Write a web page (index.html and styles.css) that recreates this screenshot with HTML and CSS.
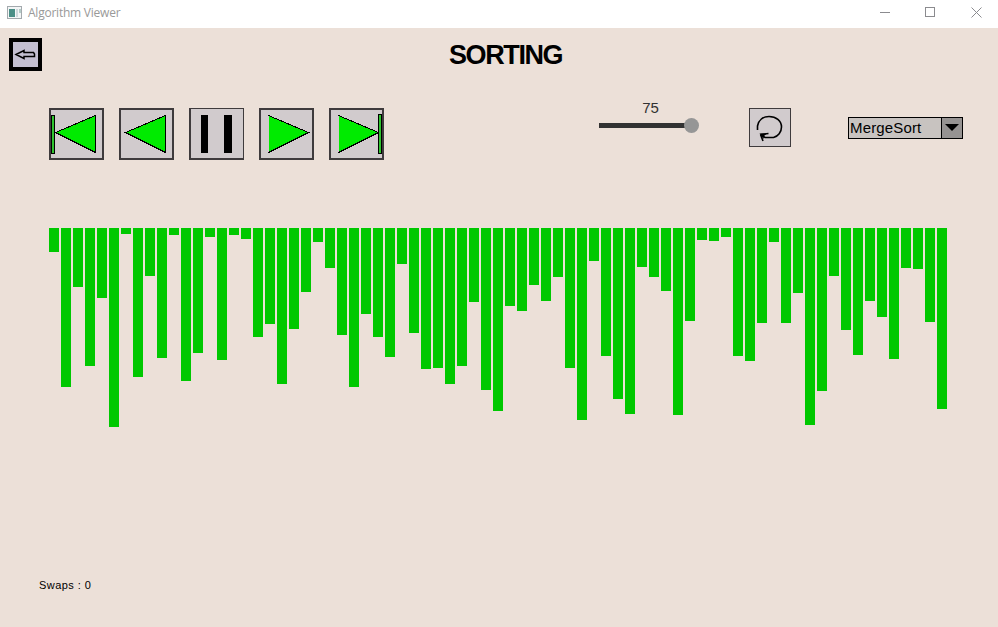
FILE: index.html
```html
<!DOCTYPE html>
<html lang="en">
<head>
<meta charset="utf-8">
<title>Algorithm Viewer</title>
<link rel="stylesheet" href="styles.css">
</head>
<body>
<header class="titlebar">
  <svg class="app-icon" width="16" height="14" viewBox="0 0 16 14">
    <rect x=".5" y=".5" width="14" height="12" fill="#f4f6f7" stroke="#a3a9ad"/>
    <rect x="2" y="3" width="6" height="8" fill="#4b8f87"/>
    <rect x="9" y="3" width="2" height="8" fill="#cfd8dc"/>
    <rect x="12" y="3" width="2" height="4" fill="#b4ccc8"/>
  </svg>
  <span class="app-name">Algorithm Viewer</span>
  <div class="window-buttons">
    <svg width="11" height="11"><path d="M0 5.500H10" stroke="#8b8b8f"/></svg>
    <svg width="11" height="11"><rect x=".5" y=".5" width="9" height="9" fill="none" stroke="#8b8b8f"/></svg>
    <svg width="11" height="11"><path d="M.5 .5L10.500 10.500M10.500 .5L.5 10.500" stroke="#8b8b8f"/></svg>
  </div>
</header>
<main>
  <div class="heading">
    <button class="back" aria-label="Back">
      <svg width="25" height="25" viewBox="0 0 25 25"><path d="M3 12.500L11 8.500V10.500H20.500L21.500 12V14.500H11V16.500Z" fill="none" stroke="#000" stroke-width="1.500"/></svg>
    </button>
    <h1>SORTING</h1>
  </div>
  <div class="toolbar">
    <div class="playback">
      <button class="step" aria-label="First"><svg width="51" height="48" shape-rendering="crispEdges"><rect x=".5" y="5.500" width="3" height="38" fill="#2fc42f" stroke="#000"/><path d="M4.500 22.500L44.500 5.500V42.500Z" fill="#00eb00" stroke="#000"/></svg></button>
      <button class="step" aria-label="Previous"><svg width="51" height="48" shape-rendering="crispEdges"><path d="M4.500 22.500L44.500 5.500V42.500Z" fill="#00eb00" stroke="#000"/></svg></button>
      <button class="step pause" aria-label="Pause"><svg width="51" height="48" shape-rendering="crispEdges"><path d="M10 5H17V43H10ZM33 5H41V43H33Z"/></svg></button>
      <button class="step" aria-label="Next"><svg width="51" height="48" shape-rendering="crispEdges"><path d="M47.500 22.500L7.500 5.500V42.500Z" fill="#00eb00"/><path d="M7.500 5.500L47.500 22.500L7.500 42.500" fill="none" stroke="#000"/></svg></button>
      <button class="step" aria-label="Last"><svg width="51" height="48" shape-rendering="crispEdges"><path d="M47.500 22.500L7.500 5.500V42.500Z" fill="#00eb00"/><path d="M7.500 5.500L47.500 22.500L7.500 42.500" fill="none" stroke="#000"/><rect x="47.500" y="4.500" width="3" height="39" fill="#2fc42f" stroke="#000"/></svg></button>
    </div>
    <div class="size">
      <span class="size-value">75</span>
      <svg width="101" height="16"><rect y="6" width="92" height="5" fill="#323232"/><circle cx="92.500" cy="8.500" r="7.500" fill="#969696"/></svg>
    </div>
    <button class="reset" aria-label="Reset">
      <svg width="40" height="37" viewBox="0 0 40 37"><path d="M7.500 21V17C8.500 11 13 7.500 19 7.500C26 7.500 31.500 11.500 31.500 18C31.500 23 28 27.500 23.500 28.500H15L10.500 25.500M10.500 25.500L18.500 24.500M10.500 25.500L13 32" fill="none" stroke="#000" stroke-width="1.600"/><path d="M9.500 24.500L17 24.500L14 27L13.500 30Z"/></svg>
    </button>
    <div class="picker">
      <span class="picker-label">MergeSort</span>
      <span class="picker-arrow"><svg width="14" height="8"><path d="M0 0H14L7 7Z"/></svg></span>
    </div>
  </div>
  <div class="bars" id="bars"></div>
  <footer class="swaps">Swaps : 0</footer>
</main>
<script src="bars.js"></script>
</body>
</html>
```
FILE: styles.css
```css
* { box-sizing: border-box; }
body {
  margin: 0;
  width: 998px;
  height: 627px;
  overflow: hidden;
  display: flex;
  flex-direction: column;
  background: #ece0d8;
  color: #000;
  font-family: "Liberation Sans", Arial, sans-serif;
}
svg { display: block; flex: none; }
button { padding: 0; border-radius: 0; }
.titlebar {
  height: 28px;
  padding: 0 16px 3px 7px;
  display: flex;
  align-items: center;
  background: #fff;
}
.app-name {
  margin-left: 5px;
  font: 12px/16px "Open Sans", "Noto Sans", sans-serif;
  letter-spacing: -.23px;
  color: #999;
}
.window-buttons { display: flex; gap: 34px; margin-left: auto; }
.window-buttons svg:last-child { margin-left: 1px; }
main { flex: 1; display: flex; flex-direction: column; }
.heading {
  height: 80px;
  padding: 10px 9px 0;
  display: flex;
  align-items: flex-start;
}
.back {
  width: 33px;
  height: 33px;
  border: 4px solid #000;
  background: #c3bfd1;
}
h1 {
  margin: 0 0 0 407px;
  font-size: 27px;
  line-height: 34px;
  letter-spacing: -1.4px;
}
.toolbar {
  height: 120px;
  padding-left: 49px;
  display: flex;
  align-items: flex-start;
}
.playback { display: flex; gap: 15px; }
.step {
  width: 55px;
  height: 52px;
  border: 2px solid #3f3b3d;
  background: #d1cbcd;
}
.pause { border-width: 2px 2px 2px 2px; border-top-width: 1px; border-right-width: 1px; }
.size {
  width: 101px;
  height: 52px;
  margin-left: 215px;
  display: flex;
  flex-direction: column;
  align-items: center;
}
.size-value {
  margin: -9px 0 0 2px;
  font-size: 15px;
  line-height: 18px;
  color: #323232;
}
.reset {
  width: 42px;
  height: 39px;
  margin-left: 49px;
  border: 1px solid #3f3b3d;
  background: #d1cbcd;
}
.picker {
  width: 115px;
  height: 22px;
  margin: 9px 0 0 57px;
  display: flex;
  border: 1px solid #000;
  background: #c8c3c0;
}
.picker-label {
  width: 93px;
  padding-left: 1px;
  border-right: 1px solid #000;
  font-size: 15px;
  line-height: 20px;
  letter-spacing: .15px;
}
.picker-arrow {
  flex: 1;
  display: flex;
  align-items: center;
  justify-content: center;
  background: #969392;
}
.bars {
  height: 350px;
  padding-left: 49px;
  display: flex;
  align-items: flex-start;
  gap: 2px;
}
.bar { width: 10px; flex: none; background: #00c800; }
.swaps {
  padding-left: 39px;
  font-size: 11px;
  line-height: 15px;
  letter-spacing: .45px;
}
```
FILE: bars.js
```js
const values = [
  24, 159, 59, 138, 70, 199, 6, 149, 48, 130, 7, 153, 125, 9, 132,
  7, 11, 109, 96, 156, 101, 64, 14, 40, 107, 159, 86, 109, 129, 36,
  105, 141, 140, 156, 138, 74, 162, 183, 78, 83, 57, 73, 49, 140, 192,
  33, 128, 171, 186, 39, 49, 63, 187, 93, 12, 13, 9, 128, 133, 95,
  14, 95, 65, 197, 163, 48, 102, 127, 73, 89, 131, 40, 41, 94, 181
];
const chart = document.getElementById("bars");
for (const value of values) {
  const bar = document.createElement("div");
  bar.className = "bar";
  bar.style.height = value + "px";
  chart.append(bar);
}
```
